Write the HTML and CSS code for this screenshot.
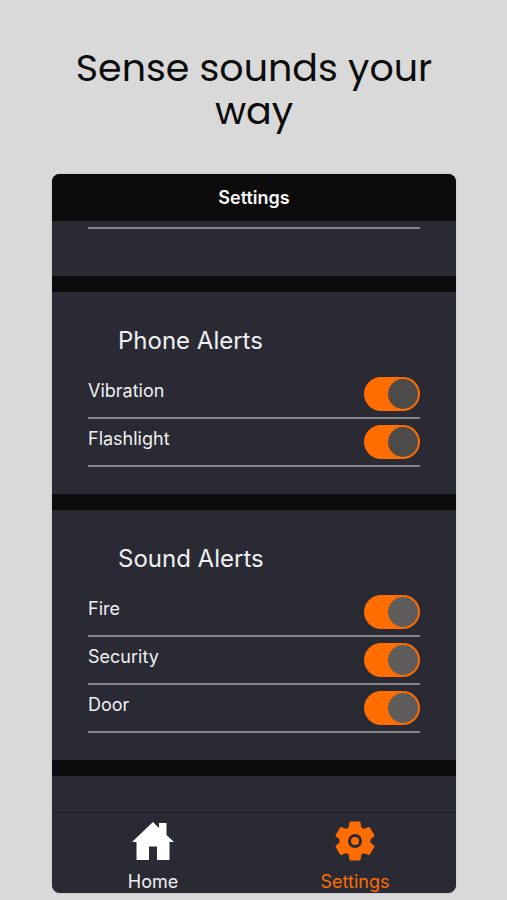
FILE: index.html
```
<!DOCTYPE html>
<html lang="en">
<head>
<meta charset="utf-8">
<meta name="viewport" content="width=device-width, initial-scale=1">
<title>Sense sounds your way</title>
<link rel="stylesheet" href="styles.css">
</head>
<body>
<h1 class="headline">Sense sounds your way</h1>
<main class="phone">
  <header class="phone-header"><h2 class="phone-title">Settings</h2></header>
  <section class="group group-previous"><hr class="rule"></section>
  <section class="group">
    <h3 class="group-title">Phone Alerts</h3>
    <label class="row"><span>Vibration</span><input class="switch" type="checkbox" role="switch" checked></label>
    <label class="row"><span>Flashlight</span><input class="switch" type="checkbox" role="switch" checked></label>
  </section>
  <section class="group">
    <h3 class="group-title">Sound Alerts</h3>
    <label class="row"><span>Fire</span><input class="switch switch-light" type="checkbox" role="switch" checked></label>
    <label class="row"><span>Security</span><input class="switch switch-light" type="checkbox" role="switch" checked></label>
    <label class="row"><span>Door</span><input class="switch switch-light" type="checkbox" role="switch" checked></label>
  </section>
  <div class="group-next"></div>
  <nav class="tabs">
    <a class="tab" href="#home">
      <svg class="tab-icon" viewBox="0 0 44 40" aria-hidden="true">
        <path fill="currentColor" d="M22 1 L28 7 V2 H35.500 V14 L43 21 H38.500 V39 H26 V25.500 H18 V39 H5.500 V21 H1 Z"/>
      </svg>
      <span>Home</span>
    </a>
    <a class="tab tab-active" href="#settings" aria-current="page">
      <svg class="tab-icon" viewBox="0 0 44 40" aria-hidden="true">
        <g fill="currentColor" stroke="currentColor" stroke-width="2" stroke-linejoin="round">
          <path d="M17.500 1.500 H26.500 L27.500 7 L31 9 L36 7 L40.500 14.500 L36.500 18 V22 L40.500 25.500 L36 33 L31 31 L27.500 33 L26.500 38.500 H17.500 L16.500 33 L13 31 L8 33 L3.500 25.500 L7.500 22 V18 L3.500 14.500 L8 7 L13 9 L16.500 7 Z"/>
        </g>
        <circle class="gear-ring" cx="22" cy="20" r="5.500"/>
      </svg>
      <span>Settings</span>
    </a>
  </nav>
</main>
</body>
</html>
```
FILE: styles.css
```
* { box-sizing: border-box; }

body {
  margin: 0;
  min-height: 100vh;
  padding: 46px 51px 7px 52px;
  display: flex;
  flex-direction: column;
  background: #d9d9d9;
  font-family: Inter, "Liberation Sans", sans-serif;
}

h1, h2, h3 { margin: 0; font-weight: 400; }

.headline {
  margin-bottom: 42px;
  color: #0b0c0b;
  font-family: Poppins, Inter, sans-serif;
  font-feature-settings: "cv11";
  font-size: 38px;
  line-height: 43px;
  text-align: center;
}

.phone {
  flex: 1;
  display: flex;
  flex-direction: column;
  overflow: hidden;
  border-radius: 8px;
  background: #292a33;
  color: #f0f0f2;
  box-shadow: 0 0 1px #6c6c70;
}

.phone-header {
  padding: 12px 0;
  background: #0b0c0b;
  text-align: center;
}

.phone-title {
  color: #fafafa;
  font-size: 18px;
  font-weight: 600;
  line-height: 23px;
}

.group {
  padding: 33px 36px 27px;
  border-bottom: 16px solid #0b0c0b;
}

.group-previous { padding-top: 6px; padding-bottom: 47px; }

.rule { margin: 0; border: 0; border-top: 2px solid #85858c; }

.group-title {
  padding: 0 30px 14px;
  font-size: 24px;
  line-height: 32px;
}

.row {
  display: flex;
  justify-content: space-between;
  align-items: flex-start;
  height: 48px;
  padding-top: 6px;
  border-bottom: 2px solid #85858c;
  font-size: 18px;
  line-height: 28px;
}

.switch {
  appearance: none;
  display: flex;
  width: 56px;
  height: 34px;
  margin: 0;
  padding: 2px;
  border-radius: 17px;
  background: #ff6d00;
}

.switch::before {
  content: "";
  width: 30px;
  height: 30px;
  border-radius: 50%;
  background: #4c4b4a;
}

.switch:checked { justify-content: flex-end; }

.switch-light::before { background: #5e5d5c; }

.group-next { flex: 1; }

.tabs {
  display: flex;
  border-top: 1px solid #1a1b22;
}

.tab {
  flex: 1;
  display: flex;
  flex-direction: column;
  align-items: center;
  gap: 9px;
  padding-top: 8px;
  color: #f0f0f2;
  font-size: 18px;
  line-height: 23px;
  text-decoration: none;
}

.tab-icon { width: 44px; height: 40px; color: #fff; }

.tab-active, .tab-active .tab-icon { color: #ff6d00; }

.gear-ring { fill: none; stroke: #292a33; stroke-width: 3; }
```
